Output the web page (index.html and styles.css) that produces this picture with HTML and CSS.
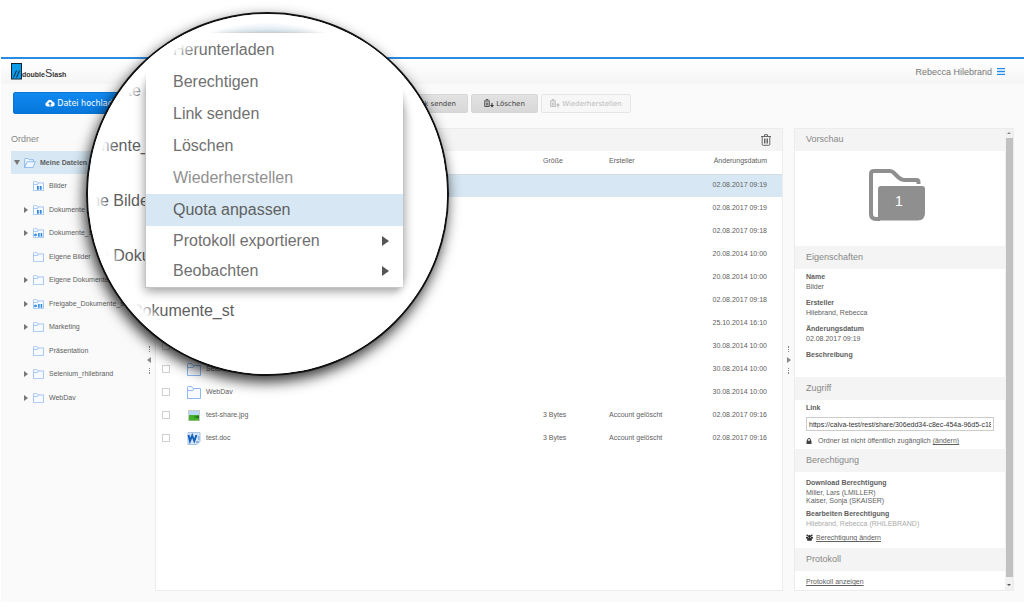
FILE: index.html
```html
<!DOCTYPE html>
<html lang="de">

<head>
    <meta charset="UTF-8">
    <meta name="viewport" content="width=device-width, initial-scale=1.0">
    <title>doubleSlash - Meine Dateien</title>
    <link rel="stylesheet" href="styles.css">
</head>

<body>

    <!-- shared icons -->
    <svg class="sprite" aria-hidden="true">
        <symbol id="folder" viewBox="0 0 14 13">
            <path d="M.5 12.5v-11q0-1 1-1h3l1.500 2h7.500v10z M.5 4.500h5.500l1-2" fill="#f7fbff" stroke="#8fb9f0" />
        </symbol>
        <symbol id="folder-open" viewBox="0 0 14 12">
            <path d="M.5 11.500v-10q0-1 1-1h3l1.500 1.500h5v2.500M.5 11.500l3-7h10l-3 7z" fill="#eef6ff" stroke="#7fb0ec" />
        </symbol>
        <symbol id="folder-shared" viewBox="0 0 14 13">
            <path d="M.5 12.500v-11q0-1 1-1h3l1.500 2h7.500v10z M.5 4.500h5.500l1-2" fill="#f7fbff" stroke="#8fb9f0" />
            <path d="M5 6.500h2.300v5H5zM8.700 6.500H11v5H8.700z" fill="#2b86dd" />
        </symbol>
        <symbol id="folder-linked" viewBox="0 0 14 13">
            <path d="M.5 12.500v-11q0-1 1-1h3l1.500 2h7.500v10z M.5 4.500h5.500l1-2" fill="#f7fbff" stroke="#8fb9f0" />
            <path d="M6.500 6.500h2v5h-2zM9.800 6.500h2v5h-2zM1 8h2V6.500L5.500 9 3 11.500V10H1z" fill="#2b86dd" />
        </symbol>
        <symbol id="trash" viewBox="0 0 10 12">
            <path d="M0 2.500h10M3.500 2V.7h3V2M1.200 3v7.300q0 1 1 1h5.600q1 0 1-1V3M3.500 4.500v5M5 4.500v5M6.500 4.500v5" fill="none" stroke="currentColor" />
        </symbol>
        <symbol id="grip-left" viewBox="0 0 4 28">
            <path d="M2 0h1v2H2zM2 3h1v1H2zM2 5h1v1H2zM2 22h1v1H2zM2 24h1v1H2zM2 26h1v2H2zM4 11v6L0 14z" fill="#888" />
        </symbol>
        <symbol id="grip-right" viewBox="0 0 4 28">
            <path d="M1 0h1v2H1zM1 3h1v1H1zM1 5h1v1H1zM1 22h1v1H1zM1 24h1v1H1zM1 26h1v2H1zM0 11v6l4-3z" fill="#888" />
        </symbol>
    </svg>

    <div class="app">
        <header class="header">
            <a class="logo" href="#">
                <svg width="11" height="17" viewBox="0 0 11 17">
                    <rect x=".5" y=".5" width="10" height="15.500" fill="#0a9be8" stroke="#123" />
                    <path d="M2.500 14.500l3-7M5.500 14.500l3-7" stroke="#123" fill="none" />
                </svg>
                <span>double<b>S</b>lash</span>
            </a>
            <div class="user">
                Rebecca Hilebrand
                <svg width="8" height="7" viewBox="0 0 8 7">
                    <path d="M0 .5h8M0 3.500h8M0 6.500h8" stroke="#2489e8" />
                    <path d="M0 2h8M0 5h8" stroke="#9fcbf5" />
                </svg>
            </div>
        </header>

        <div class="toolbar">
            <button type="button" class="upload">
                <svg width="10" height="8" viewBox="0 0 10 8">
                    <path d="M2.500 7.500A2.300 2.300 0 0 1 2 3 2.900 2.900 0 0 1 7.500 2.600 2.500 2.500 0 0 1 7.800 7.500z" fill="#fff" />
                    <path d="M5 2.700L7 5H5.700v1.700H4.300V5H3z" fill="#0b7fe4" />
                </svg>
                Datei hochladen
            </button>
            <div class="actions">
                <button type="button">Neuer Ordner</button>
                <button type="button">Herunterladen</button>
                <button type="button">Berechtigen</button>
                <button type="button">
                    <svg width="8" height="8" viewBox="0 0 8 8"><path d="M1 7l6-6M4 1h3v3" stroke="#444" fill="none" /></svg>
                    Link senden
                </button>
                <button type="button" class="narrow">
                    <svg width="10" height="9" viewBox="0 0 10 9">
                        <path d="M0 2h6M2 1.500V.5h2v1M.7 2.500v5h4.600v-5M2.300 3.500v3M3.800 3.500v3" stroke="#555" fill="none" />
                        <path d="M7.500 4h1v2H10L8 8.500 6 6h1.500z" fill="#333" />
                    </svg>
                    Löschen
                </button>
                <button type="button" class="wide" disabled>
                    <svg width="10" height="9" viewBox="0 0 10 9">
                        <path d="M0 2h6M2 1.500V.5h2v1M.7 2.500v5h4.600v-5M2.300 3.500v3M3.800 3.500v3" stroke="#bbb" fill="none" />
                        <path d="M7.500 8.500h1v-2H10L8 4 6 6.500h1.500z" fill="#bbb" />
                    </svg>
                    Wiederherstellen
                </button>
            </div>
        </div>

        <main class="main">
            <aside class="sidebar">
                <nav>
                    <h2>Ordner</h2>
                    <ul class="tree">
                        <li class="root open"><svg><use href="#folder-open" /></svg><a href="#">Meine Dateien</a></li>
                        <li><svg><use href="#folder-shared" /></svg><a href="#">Bilder</a></li>
                        <li class="closed"><svg><use href="#folder-shared" /></svg><a href="#">Dokumente</a></li>
                        <li class="closed"><svg><use href="#folder-linked" /></svg><a href="#">Dokumente_st</a></li>
                        <li><svg><use href="#folder" /></svg><a href="#">Eigene Bilder</a></li>
                        <li class="closed"><svg><use href="#folder" /></svg><a href="#">Eigene Dokumente</a></li>
                        <li class="closed"><svg><use href="#folder-linked" /></svg><a href="#">Freigabe_Dokumente_st</a></li>
                        <li class="closed"><svg><use href="#folder" /></svg><a href="#">Marketing</a></li>
                        <li><svg><use href="#folder" /></svg><a href="#">Präsentation</a></li>
                        <li class="closed"><svg><use href="#folder" /></svg><a href="#">Selenium_rhilebrand</a></li>
                        <li class="closed"><svg><use href="#folder" /></svg><a href="#">WebDav</a></li>
                    </ul>
                </nav>
                <svg class="grip"><use href="#grip-left" /></svg>
            </aside>

            <section class="files">
                <div class="bar">
                    <svg width="10" height="12"><use href="#trash" /></svg>
                </div>
                <table>
                    <colgroup>
                        <col class="col-check">
                        <col>
                        <col class="col-size">
                        <col class="col-owner">
                        <col class="col-date">
                    </colgroup>
                    <thead>
                        <tr>
                            <th></th>
                            <th>Name</th>
                            <th>Größe</th>
                            <th>Ersteller</th>
                            <th>Änderungsdatum</th>
                        </tr>
                    </thead>
                    <tbody>
                        <tr class="selected">
                            <td><input type="checkbox" aria-label="Bilder" checked></td>
                            <td><svg><use href="#folder-shared" /></svg>Bilder</td>
                            <td></td>
                            <td></td>
                            <td>02.08.2017 09:19</td>
                        </tr>
                        <tr>
                            <td><input type="checkbox" aria-label="Dokumente"></td>
                            <td><svg><use href="#folder-shared" /></svg>Dokumente</td>
                            <td></td>
                            <td></td>
                            <td>02.08.2017 09:19</td>
                        </tr>
                        <tr>
                            <td><input type="checkbox" aria-label="Dokumente_st"></td>
                            <td><svg><use href="#folder-linked" /></svg>Dokumente_st</td>
                            <td></td>
                            <td></td>
                            <td>02.08.2017 09:18</td>
                        </tr>
                        <tr>
                            <td><input type="checkbox" aria-label="Eigene Bilder"></td>
                            <td><svg><use href="#folder" /></svg>Eigene Bilder</td>
                            <td></td>
                            <td></td>
                            <td>20.08.2014 10:00</td>
                        </tr>
                        <tr>
                            <td><input type="checkbox" aria-label="Eigene Dokumente"></td>
                            <td><svg><use href="#folder" /></svg>Eigene Dokumente</td>
                            <td></td>
                            <td></td>
                            <td>20.08.2014 10:00</td>
                        </tr>
                        <tr>
                            <td><input type="checkbox" aria-label="Freigabe_Dokumente_st"></td>
                            <td><svg><use href="#folder-linked" /></svg>Freigabe_Dokumente_st</td>
                            <td></td>
                            <td></td>
                            <td>02.08.2017 09:18</td>
                        </tr>
                        <tr>
                            <td><input type="checkbox" aria-label="Marketing"></td>
                            <td><svg><use href="#folder" /></svg>Marketing</td>
                            <td></td>
                            <td></td>
                            <td>25.10.2014 16:10</td>
                        </tr>
                        <tr>
                            <td><input type="checkbox" aria-label="Präsentation"></td>
                            <td><svg><use href="#folder" /></svg>Präsentation</td>
                            <td></td>
                            <td></td>
                            <td>30.08.2014 10:00</td>
                        </tr>
                        <tr>
                            <td><input type="checkbox" aria-label="Selenium_rhilebrand"></td>
                            <td><svg><use href="#folder" /></svg>Selenium_rhilebrand</td>
                            <td></td>
                            <td></td>
                            <td>30.08.2014 10:00</td>
                        </tr>
                        <tr>
                            <td><input type="checkbox" aria-label="WebDav"></td>
                            <td><svg><use href="#folder" /></svg>WebDav</td>
                            <td></td>
                            <td></td>
                            <td>30.08.2014 10:00</td>
                        </tr>
                        <tr>
                            <td><input type="checkbox" aria-label="test-share.jpg"></td>
                            <td>
                                <svg viewBox="0 0 14 13">
                                    <rect x="1.500" y="1.500" width="11" height="10" fill="#b9d8f5" stroke="#ccc" />
                                    <path d="M2 6h10v5.500H2z" fill="#45b02c" />
                                    <path d="M6 8l6-1.500v3z" fill="#24781c" />
                                </svg>test-share.jpg
                            </td>
                            <td>3 Bytes</td>
                            <td>Account gelöscht</td>
                            <td>02.08.2017 09:16</td>
                        </tr>
                        <tr>
                            <td><input type="checkbox" aria-label="test.doc"></td>
                            <td>
                                <svg viewBox="0 0 14 13">
                                    <path d="M1 .5h12v9l-3 3H1z" fill="#d6e6f8" stroke="#a8c4e6" />
                                    <path d="M1.500 3l1.500 6 2.200-5.500L7.300 9 9.500 3" fill="none" stroke="#1560b8" stroke-width="2" />
                                    <path d="M9 10h3M11 5h1.500M11 7h1.500" stroke="#4d86c8" />
                                </svg>test.doc
                            </td>
                            <td>3 Bytes</td>
                            <td>Account gelöscht</td>
                            <td>02.08.2017 09:16</td>
                        </tr>
                    </tbody>
                </table>
            </section>

            <svg class="grip"><use href="#grip-right" /></svg>

            <aside class="details">
                <div class="details-content">
                    <h2>Vorschau</h2>
                    <div class="preview">
                        <svg width="56" height="52" viewBox="0 0 56 52">
                            <path d="M49.500 15v-2q0-2-2-2H35q-3 0-6-3l-4-4q-2-2-4-2H5Q2 2 2 5v40q0 5 5 5h4" fill="none" stroke="#8f8f8f" stroke-width="4" />
                            <path d="M12 17h41q3 0 3 3v24q0 7.500-7.500 7.500H6q3-1 3-5V20q0-3 3-3z" fill="#8f8f8f" />
                            <text x="26" y="37" fill="#fff">1</text>
                        </svg>
                    </div>

                    <h2>Eigenschaften</h2>
                    <dl class="properties">
                        <dt>Name</dt>
                        <dd>Bilder</dd>
                        <dt>Ersteller</dt>
                        <dd>Hilebrand, Rebecca</dd>
                        <dt>Änderungsdatum</dt>
                        <dd>02.08.2017 09:19</dd>
                        <dt>Beschreibung</dt>
                        <dd></dd>
                    </dl>

                    <h2>Zugriff</h2>
                    <div class="access">
                        <label for="link">Link</label>
                        <input type="text" id="link" value="https://calva-test/rest/share/306edd34-c8ec-454a-96d5-c189bc" readonly>
                        <p>
                            <svg width="6" height="6" viewBox="0 0 6 6">
                                <path d="M1.500 3V1.800a1.500 1.300 0 0 1 3 0V3" fill="none" stroke="#444" />
                                <path d="M.5 2.700h5V6h-5z" fill="#444" />
                            </svg>
                            <span>Ordner ist nicht öffentlich zugänglich <a href="#">(ändern)</a></span>
                        </p>
                    </div>

                    <h2>Berechtigung</h2>
                    <div class="permissions">
                        <h3>Download Berechtigung</h3>
                        <p>Miller, Lars (LMILLER)<br>Kaiser, Sonja (SKAISER)</p>
                        <h3>Bearbeiten Berechtigung</h3>
                        <p class="muted">Hilebrand, Rebecca (RHILEBRAND)</p>
                        <div class="change">
                            <svg width="7" height="7" viewBox="0 0 7 7">
                                <circle cx="1.300" cy="1.600" r="1" fill="#444" />
                                <circle cx="5.700" cy="1.600" r="1" fill="#444" />
                                <circle cx="3.500" cy="2.500" r="1.400" fill="#222" />
                                <path d="M0 3h2v1.500H0zM5 3h2v1.500H5zM1.200 6.800V5q0-1 1-1h2.600q1 0 1 1v1.800z" fill="#333" />
                            </svg>
                            <a href="#">Berechtigung ändern</a>
                        </div>
                    </div>

                    <h2>Protokoll</h2>
                    <div class="log">
                        <a href="#">Protokoll anzeigen</a>
                    </div>
                </div>
                <div class="scrollbar"></div>
            </aside>
        </main>
    </div>

    <!-- magnified context menu -->
    <div class="lens">
        <ul class="lens-files">
            <li>Dokumente</li>
            <li>Dokumente_st</li>
            <li>Eigene Bilder</li>
            <li>Eigene Dokumente</li>
            <li>Freigabe_Dokumente_st</li>
        </ul>
        <div class="context-menu">
            <button type="button">Herunterladen</button>
            <button type="button">Berechtigen</button>
            <button type="button">Link senden</button>
            <button type="button">Löschen</button>
            <button type="button" disabled>Wiederherstellen</button>
            <button type="button" class="active">Quota anpassen</button>
            <button type="button" class="submenu">Protokoll exportieren</button>
            <button type="button" class="submenu">Beobachten</button>
        </div>
    </div>

</body>

</html>
```

FILE: styles.css
```css
* {
    box-sizing: border-box;
}

body {
    position: relative;
    margin: 0;
    padding: 57px 0 6px 1px;
    background-color: #fff;
    color: #606060;
    font-family: "Liberation Sans", Arial, sans-serif;
    font-size: 7px;
    line-height: 10px;
}

h2,
h3,
p,
ul,
dl,
dd {
    margin: 0;
    padding: 0;
}

ul {
    list-style: none;
}

a {
    color: inherit;
}

button {
    font-family: inherit;
    cursor: pointer;
}

.sprite {
    position: absolute;
    width: 0;
    height: 0;
}

.app {
    border-top: 2px solid #2a8be2;
    background-color: #fafafa;
    padding-bottom: 11px;
}

/* header */
.header {
    display: flex;
    justify-content: space-between;
    align-items: center;
    height: 25px;
    padding: 0 19px 0 10px;
    background-image: linear-gradient(#fff, #f5f5f5);
}

.logo {
    display: flex;
    align-items: flex-end;
    color: #333;
    font-weight: bold;
    text-decoration: none;
}

.logo b {
    font-size: 11px;
    font-weight: normal;
}

.user {
    display: flex;
    align-items: center;
    gap: 5px;
    color: #777;
    font-size: 9px;
}

/* toolbar */
.toolbar {
    display: grid;
    grid-template-columns: 144px 1fr;
    padding: 8px 10px 14px;
}

.toolbar button {
    display: flex;
    align-items: center;
    justify-content: center;
    gap: 2px;
    padding: 0;
    border: 1px solid #d6d6d6;
    border-radius: 2px;
    font-family: "DejaVu Sans", Verdana, sans-serif;
    white-space: nowrap;
}

.toolbar .upload {
    height: 22px;
    margin-left: 2px;
    border-color: #0a74d4;
    background-image: linear-gradient(#1189f0, #0577dc);
    color: #fff;
    font-size: 8px;
}

.actions {
    display: flex;
    gap: 3px;
    padding-top: 2px;
}

.actions button {
    width: 76px;
    height: 19px;
    background-image: linear-gradient(#e2e2e2, #d8d8d8);
    color: #444;
    font-size: 7px;
}

.actions .narrow {
    width: 67px;
}

.actions .wide {
    width: 90px;
}

.actions button:disabled {
    border-color: #e6e6e6;
    background: #f7f7f7;
    color: #bbb;
}

/* three columns */
.main {
    display: grid;
    grid-template-columns: 144px 1fr 11px 220px;
    padding: 0 10px;
}

.grip {
    align-self: center;
    justify-self: center;
    width: 4px;
    height: 28px;
}

.sidebar {
    display: flex;
    padding-right: 4px;
}

.sidebar nav {
    flex: 1;
}

h2 {
    height: 23px;
    color: #888;
    font-size: 9px;
    font-weight: normal;
    line-height: 23px;
}

.tree li {
    display: flex;
    align-items: center;
    gap: 5px;
    height: 23px;
    padding-left: 22px;
    white-space: nowrap;
}

.tree li:nth-child(even) {
    height: 24px;
}

.tree .root {
    padding-left: 3px;
    background-color: #d7e8f4;
    font-weight: bold;
}

.tree svg {
    width: 11px;
    height: 10px;
}

.tree a {
    text-decoration: none;
}

.tree .closed {
    padding-left: 13px;
}

.tree .closed::before,
.tree .open::before,
.submenu::after {
    content: "";
    border-left: 4px solid #777;
    border-top: 3px solid transparent;
    border-bottom: 3px solid transparent;
}

.tree .open::before {
    border-top: 5px solid #777;
    border-left: 3px solid transparent;
    border-right: 3px solid transparent;
    border-bottom: 0;
}

.tree .root {
    gap: 4px;
}

.tree .root svg {
    width: 12px;
}

/* file list */
.files {
    border: 1px solid #ececec;
    background-color: #fff;
}

.bar {
    display: flex;
    align-items: center;
    justify-content: flex-end;
    height: 22px;
    padding-right: 11px;
    background-color: #f4f4f4;
    color: #666;
}

table {
    width: 100%;
    border-collapse: collapse;
    table-layout: fixed;
}

.col-check {
    width: 31px;
}

.col-size {
    width: 66px;
}

.col-owner {
    width: 90px;
}

.col-date {
    width: 83px;
}

th,
td {
    height: 23px;
    padding: 0 0 1px;
    font-weight: normal;
    text-align: left;
    white-space: nowrap;
}

th {
    padding-bottom: 3px;
    border-bottom: 1px solid #d2dde4;
}

th:last-child,
td:last-child {
    padding-right: 15px;
    text-align: right;
}

td svg {
    width: 14px;
    height: 13px;
    margin-right: 5px;
    vertical-align: middle;
}

td input {
    display: block;
    width: 8px;
    height: 8px;
    margin: 0 0 0 6px;
    border: 1px solid #d0d0d0;
    background-color: #fff;
    appearance: none;
}

.selected {
    background-color: #d7e8f4;
}

/* details */
.details {
    display: flex;
    border: 1px solid #ececec;
    background-color: #fff;
}

.details-content {
    flex: 1;
    min-width: 0;
}

.details h2 {
    padding-left: 11px;
    background-color: #f4f4f4;
}

.details h2:first-child {
    height: 22px;
    line-height: 21px;
}

.preview {
    display: flex;
    align-items: center;
    justify-content: center;
    height: 95px;
    padding: 0 6px 8px 0;
}

.preview text {
    font-size: 14px;
}

.properties {
    padding: 2px 11px;
}

dt {
    font-weight: bold;
    line-height: 11px;
}

.properties dd {
    height: 10px;
    margin-bottom: 5px;
}

.access {
    padding: 3px 11px;
}

.access label {
    display: block;
    font-weight: bold;
}

.access input {
    display: block;
    width: 100%;
    height: 14px;
    margin: 4px 0;
    padding: 0 2px;
    border: 1px solid #ccc;
    color: #333;
    font-family: inherit;
    font-size: 7px;
}

.access p {
    display: flex;
    align-items: center;
    gap: 6px;
    line-height: 11px;
}

.permissions {
    padding: 6px 11px 5px;
}

h3 {
    margin-bottom: 1px;
    font-size: 7px;
    line-height: 10px;
}

.permissions p {
    margin-bottom: 4px;
    line-height: 8px;
}

.permissions .muted {
    color: #aaa;
}

.change {
    display: flex;
    align-items: center;
    gap: 3px;
    line-height: 11px;
}

.log {
    padding: 6px 11px 3px;
}

.scrollbar {
    display: flex;
    flex-direction: column;
    align-items: center;
    justify-content: space-between;
    width: 8px;
    padding: 3px 0 4px;
    background: linear-gradient(#c1c1c1, #c1c1c1) center 9px / 7px calc(100% - 22px) no-repeat #f1f1f1;
}

.scrollbar::before {
    content: "";
    border: 2px solid transparent;
    border-bottom-color: #888;
    border-top: 0;
}

.scrollbar::after {
    content: "";
    border: 2px solid transparent;
    border-top-color: #555;
    border-bottom: 0;
}

/* magnifier */
.lens {
    position: absolute;
    top: 12px;
    left: 86px;
    width: 363px;
    height: 364px;
    border: 2px solid #111;
    border-radius: 50%;
    background: linear-gradient(#d7e8f4, #d7e8f4) 0 0 / 100% 20px no-repeat #fff;
    box-shadow: -2px 6px 14px rgba(0, 0, 0, 0.8);
    overflow: hidden;
}

/* soft edge of the glass */
.lens::after {
    content: "";
    position: absolute;
    inset: 0;
    background-image: radial-gradient(circle, transparent 160px, #fff 172px);
    pointer-events: none;
}

.lens-files {
    margin-left: -29px;
    padding-top: 49px;
    font-size: 16px;
    line-height: 55px;
    white-space: nowrap;
}

.context-menu {
    position: absolute;
    top: 18px;
    left: 57px;
    width: 259px;
    padding: 1px 0;
    border: 1px solid #c4c4c4;
    background-color: #fff;
    box-shadow: 0 3px 10px rgba(0, 0, 0, 0.4);
}

.context-menu button {
    display: flex;
    align-items: center;
    justify-content: space-between;
    width: 100%;
    height: 32px;
    padding: 0 14px 0 27px;
    border: 0;
    background: none;
    color: #707070;
    font-size: 16px;
    text-align: left;
}

.context-menu button:disabled {
    color: #909090;
}

.context-menu .active {
    background-color: #d7e8f4;
    color: #606060;
}

.context-menu .submenu {
    height: 30px;
}

.submenu::after {
    border-left: 7px solid #555;
    border-top: 5px solid transparent;
    border-bottom: 5px solid transparent;
}
```
